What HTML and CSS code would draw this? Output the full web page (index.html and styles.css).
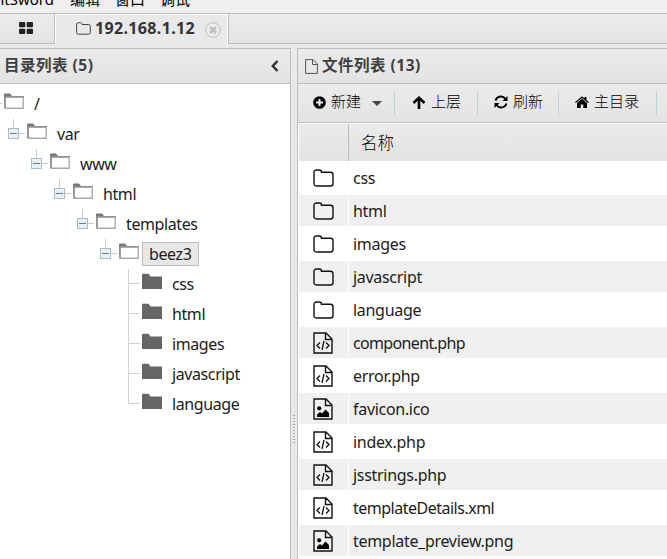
FILE: index.html
```
<!DOCTYPE html>
<html lang="zh">
<head>
<meta charset="utf-8">
<title>AntSword</title>
<link rel="stylesheet" href="styles.css">
</head>
<body>
<svg class="defs" width="0" height="0">
  <symbol id="open" viewBox="0 0 20 17"><path d="M0 12V1.500Q0 .5 1 .5H6L8 3H20V4.500H1.500V13Z" fill="#777"/><path d="M1 4.200V15.300H19.200V4.200Z" fill="#fff" stroke="#aaa" stroke-width="1.400"/><path d="M1 4V15" stroke="#888" stroke-width="1.300"/></symbol>
  <symbol id="closed" viewBox="0 0 20 17"><path d="M0 16V2Q0 .7 1 .7H6.500L8.500 3.500H20V16Z" fill="#666"/></symbol>
  <symbol id="folder" viewBox="0 0 21 18"><path d="M1 3.500Q1 1 3.500 1H6.500Q8.500 1 8.500 3.200H17.500Q20 3.200 20 5.700V14.500Q20 17 17.500 17H3.500Q1 17 1 14.500Z" fill="none" stroke="#111" stroke-width="1.400"/></symbol>
  <symbol id="code" viewBox="0 0 20 22"><path d="M1 1H13L19 7V21H1ZM12.500 1V7.500H19" fill="none" stroke="#111" stroke-width="1.400"/><path d="M7 10.500L4 13.500L7 16.500M13 10.500L16 13.500L13 16.500M11 9L9 18" fill="none" stroke="#111" stroke-width="1.300"/></symbol>
  <symbol id="image" viewBox="0 0 20 22"><path d="M1 1H13L19 7V21H1ZM12.500 1V7.500H19" fill="none" stroke="#111" stroke-width="1.400"/><circle cx="6.200" cy="10.300" r="2.100"/><path d="M4 19V16.500L7 14L9 15.500L12.500 11.500L16 15V19Z"/></symbol>
</svg>
<div class="app">
  <nav class="menu"><span class="brand">AntSword</span><span>编辑</span><span>窗口</span><span>调试</span></nav>
  <div class="tabs">
    <div class="tab home"><svg width="14" height="12" viewBox="0 0 14 12" fill="#222"><rect width="6.300" height="5.300" rx="1"/><rect x="7.700" width="6.300" height="5.300" rx="1"/><rect y="6.700" width="6.300" height="5.300" rx="1"/><rect x="7.700" y="6.700" width="6.300" height="5.300" rx="1"/></svg></div>
    <div class="tab active"><svg width="15" height="13" viewBox="0 0 15 13"><path d="M.6 2.500Q.6.700 2.400.7H4.500Q6 .7 6 2.500H12.500Q14.300 2.500 14.300 4.200V10.500Q14.300 12.200 12.500 12.200H2.400Q.6 12.200.6 10.500Z" fill="none" stroke="#444"/></svg><b class="host">192.168.1.12</b><svg class="close" width="16" height="16" viewBox="0 0 16 16"><circle cx="8" cy="8" r="7.300" fill="#eee" stroke="#bbb"/><path d="M5 5L11 11M11 5L5 11" stroke="#bdbdbd" stroke-width="2.600"/></svg></div>
    <div class="tab rest"></div>
  </div>
  <main>
    <section class="left">
      <header><b>目录列表 (5)</b><svg class="fold" width="8" height="12" viewBox="0 0 8 12"><path d="M6.500 1L1.800 6L6.500 11" fill="none" stroke="#333" stroke-width="2.500"/></svg></header>
      <div class="tree">
        <div class="node"><i class="cell top"></i><svg><use href="#open"/></svg><span>/</span></div>
        <div class="kids"><div class="node"><i class="cell toggle"></i><svg><use href="#open"/></svg><span>var</span></div>
        <div class="kids"><div class="node"><i class="cell toggle"></i><svg><use href="#open"/></svg><span>www</span></div>
        <div class="kids"><div class="node"><i class="cell toggle"></i><svg><use href="#open"/></svg><span>html</span></div>
        <div class="kids"><div class="node"><i class="cell toggle"></i><svg><use href="#open"/></svg><span>templates</span></div>
        <div class="kids"><div class="node"><i class="cell toggle"></i><svg><use href="#open"/></svg><span class="selected">beez3</span></div>
        <div class="kids">
          <div class="node"><i class="cell line"></i><svg><use href="#closed"/></svg><span>css</span></div>
          <div class="node"><i class="cell line"></i><svg><use href="#closed"/></svg><span>html</span></div>
          <div class="node"><i class="cell line"></i><svg><use href="#closed"/></svg><span>images</span></div>
          <div class="node"><i class="cell line"></i><svg><use href="#closed"/></svg><span>javascript</span></div>
          <div class="node"><i class="cell line last"></i><svg><use href="#closed"/></svg><span>language</span></div>
        </div></div></div></div></div></div>
      </div>
    </section>
    <div class="splitter"><i></i></div>
    <section class="right">
      <header><svg width="13" height="15" viewBox="0 0 13 15"><path d="M.6.600H8L12.400 5V14.400H.6ZM7.500.600V5.500H12.400" fill="none" stroke="#555"/></svg><b>文件列表 (13)</b></header>
      <div class="toolbar">
        <div class="tool new"><svg width="13" height="13" viewBox="0 0 13 13"><circle cx="6.500" cy="6.500" r="6.300"/><path d="M6.500 3V10M3 6.500H10" stroke="#eee" stroke-width="2"/></svg><span>新建</span><i class="caret"></i></div>
        <div class="tool up"><svg width="14" height="13" viewBox="0 0 14 13"><path d="M1.500 7L7 1.800L12.500 7M7 2V13" fill="none" stroke="#000" stroke-width="2.600"/></svg><span>上层</span></div>
        <div class="tool refresh"><svg width="14" height="14" viewBox="0 0 14 14"><path d="M1.500 5.500Q3 1.500 7 1.500Q9.700 1.500 11.500 4M12.500 8.500Q11 12.500 7 12.500Q4.300 12.500 2.500 10" fill="none" stroke="#000" stroke-width="2"/><path d="M13.500 1V6H8.500ZM.5 13V8H5.500Z"/></svg><span>刷新</span></div>
        <div class="tool root"><svg width="14" height="12" viewBox="0 0 14 12"><path d="M0 6.200L7 .3L9.500 2.400V1H11.500V4L14 6.200L13.200 7L7 1.900L.8 7ZM2 7L7 2.800L12 7V12H8.300V8.500H5.700V12H2Z"/></svg><span>主目录</span></div>
      </div>
      <div class="grid">
        <div class="head"><i></i><span>名称</span></div>
        <div class="file"><i><svg class="dir"><use href="#folder"/></svg></i><span>css</span></div>
        <div class="file"><i><svg class="dir"><use href="#folder"/></svg></i><span>html</span></div>
        <div class="file"><i><svg class="dir"><use href="#folder"/></svg></i><span>images</span></div>
        <div class="file"><i><svg class="dir"><use href="#folder"/></svg></i><span>javascript</span></div>
        <div class="file"><i><svg class="dir"><use href="#folder"/></svg></i><span>language</span></div>
        <div class="file"><i><svg class="doc"><use href="#code"/></svg></i><span class="tight">component.php</span></div>
        <div class="file"><i><svg class="doc"><use href="#code"/></svg></i><span>error.php</span></div>
        <div class="file"><i><svg class="doc"><use href="#image"/></svg></i><span>favicon.ico</span></div>
        <div class="file"><i><svg class="doc"><use href="#code"/></svg></i><span>index.php</span></div>
        <div class="file"><i><svg class="doc"><use href="#code"/></svg></i><span>jsstrings.php</span></div>
        <div class="file"><i><svg class="doc"><use href="#code"/></svg></i><span class="tight2">templateDetails.xml</span></div>
        <div class="file"><i><svg class="doc"><use href="#image"/></svg></i><span>template_preview.png</span></div>
      </div>
    </section>
  </main>
</div>
</body>
</html>
```
FILE: styles.css
```
* { box-sizing: border-box; }
body { margin: 0; background: #e8e8e8; color: #1c1c1c; font: 16px "Noto Sans", "Noto Sans CJK SC", sans-serif; }
svg { display: block; flex: none; }
.defs { position: absolute; }
.app { width: 667px; height: 559px; overflow: hidden; display: flex; flex-direction: column; }
.menu { height: 14px; flex: none; display: flex; align-items: flex-end; background: #efefef; border-bottom: 1px solid #bdbdbd; overflow: hidden; line-height: 22px; color: #000; white-space: nowrap; font-size: 15px; }
.menu span { width: 45px; flex: none; margin-bottom: 3px; }
.menu .brand { width: 70px; display: flex; justify-content: flex-end; padding-right: 16px; }
.tabs { height: 30px; flex: none; display: flex; background: #e8e8e8; }
.tab { background: linear-gradient(#ebebeb, #e4e4e4); border-bottom: 1px solid #bdbdbd; }
.home { width: 55px; border-right: 1px solid #bdbdbd; padding: 8px 0 0 19px; }
.active { width: 173px; display: flex; align-items: center; background: #e9e9e9; border: 1px solid #fff; border-bottom: 0; padding-left: 20px; color: #333; }
.active > svg:first-child { margin-top: -2px; }
.host { width: 114px; padding-left: 4px; margin-top: -3px; font-size: 16px; letter-spacing: .35px; }
.rest { flex: 1; border-left: 1px solid #bdbdbd; }
main { flex: 1; display: flex; min-height: 0; padding-top: 4px; background: #e9e9e9; }
section { border-top: 1px solid #bdbdbd; }
header { height: 35px; display: flex; align-items: center; background: linear-gradient(#ebebeb, #e3e3e3); border-bottom: 1px solid #bdbdbd; color: #404040; white-space: nowrap; font-size: 15.500px; letter-spacing: .5px; }
header b { margin-top: -3px; }
.left { width: 291px; flex: none; background: #fff; border-right: 1px solid #bdbdbd; }
.left header { padding: 0 11px 0 4px; justify-content: space-between; }
.tree { padding-top: 5px; margin-left: -15px; }
.kids { padding-left: 23px; }
.node { height: 30px; display: flex; align-items: flex-start; }
.node svg { width: 20px; height: 17px; margin: 4px 3px 0 0; }
.node span { height: 24px; line-height: 23px; border: 1px solid transparent; padding: 0 6px; margin-top: 3px; white-space: nowrap; letter-spacing: -.4px; }
.node .selected { background: #e7e7e7; border-color: #bdbdbd; width: 57px; }
.cell { width: 19px; height: 30px; flex: none; }
.top { background: linear-gradient(#ccc, #ccc) 11px 14px / 6px 1px no-repeat; }
.toggle { background:
  linear-gradient(#5c8196, #5c8196) 2px 14px / 7px 1px no-repeat,
  linear-gradient(#e9f1f4, #e9f1f4) 1px 10px / 9px 9px no-repeat,
  linear-gradient(#a9bcc6, #a9bcc6) 0 9px / 11px 11px no-repeat,
  linear-gradient(#ccc, #ccc) 5px 0 / 1px 9px no-repeat,
  linear-gradient(#ccc, #ccc) 11px 14px / 6px 1px no-repeat; }
.line { background:
  linear-gradient(#d2d2d2, #d2d2d2) 5px 0 / 1px 30px no-repeat,
  linear-gradient(#d2d2d2, #d2d2d2) 5px 14px / 12px 1px no-repeat; }
.line.last { background-size: 1px 15px, 12px 1px; }
.splitter { width: 6px; flex: none; display: flex; align-items: flex-start; justify-content: center; padding-top: 367px; }
.splitter i { width: 2px; height: 29px; background: repeating-linear-gradient(#aaa 0 1px, transparent 1px 3px); }
.right { flex: 1; min-width: 0; border-left: 1px solid #bdbdbd; background: #fff; }
.right header { padding-left: 7px; gap: 4px; }
.toolbar { height: 39px; display: flex; align-items: center; background: linear-gradient(#ebebeb, #e3e3e3); border-bottom: 1px solid #bdbdbd; color: #000; font-size: 15px; }
.tool { height: 25px; display: flex; align-items: center; flex: none; gap: 5px; border-right: 1px solid #b8d4dc; font-family: "Noto Sans CJK SC", sans-serif; font-weight: 300; }
.tool span { margin-top: -4px; line-height: 20px; }
.tool svg { margin-top: -2px; }
.new { width: 97px; padding-left: 15px; }
.caret { margin-left: 6px; border: 5px solid transparent; border-top-color: #444; border-bottom: 0; }
.up { width: 83px; padding-left: 17px; }
.refresh { width: 81px; padding-left: 16px; }
.root { width: 98px; padding-left: 16px; }
.grid { padding: 1px 0 0 1px; }
.head { height: 37px; display: flex; align-items: center; background: linear-gradient(#ebebeb, #e2e2e2); font: 300 16.500px "Noto Sans CJK SC", sans-serif; color: #000; }
.head i { width: 50px; height: 37px; border-right: 1px solid #bdbdbd; }
.head span { padding-left: 12px; margin-top: -1px; }
.file { height: 33px; padding: 1px 0; display: flex; }
.file i { width: 49px; margin-right: 1px; flex: none; display: flex; align-items: center; padding-left: 14px; }
.file span { flex: 1; padding-left: 4px; line-height: 32px; height: 31px; font-size: 16px; letter-spacing: -.3px; white-space: nowrap; }
.file .tight { letter-spacing: -.65px; }
.file .tight2 { letter-spacing: -.5px; }
.file:nth-child(odd) i, .file:nth-child(odd) span { background: #f0f0f0; }
.dir { width: 21px; height: 18px; }
.doc { width: 20px; height: 22px; }
```
